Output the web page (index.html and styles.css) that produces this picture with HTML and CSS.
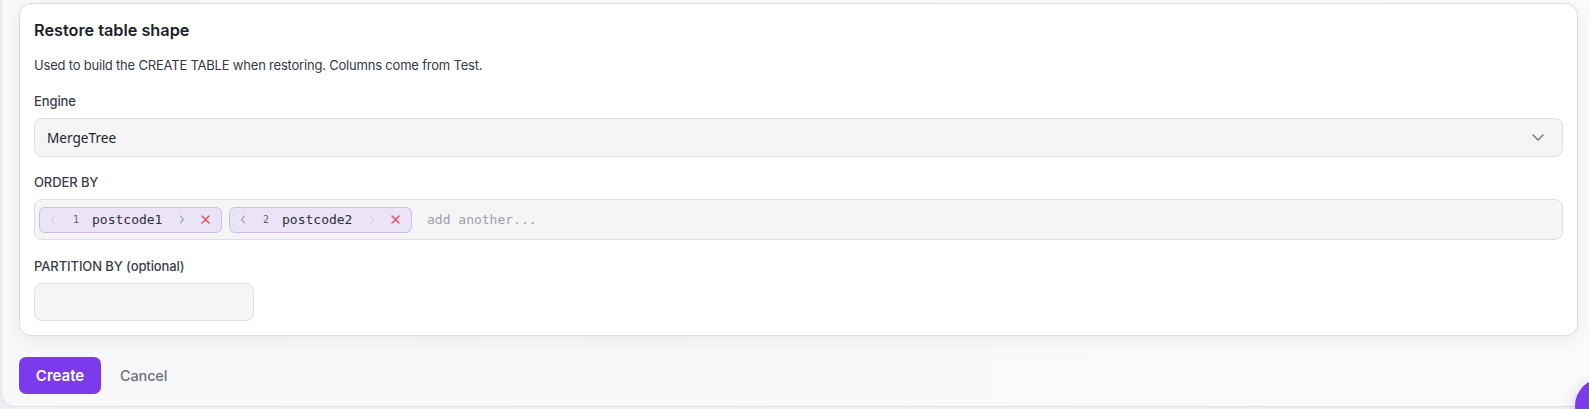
FILE: index.html
```html
<!DOCTYPE html>
<html lang="en">
<head>
<meta charset="utf-8">
<title>Restore table shape</title>
<link rel="stylesheet" href="styles.css">
</head>
<body>
<div class="panel">
  <section class="card">
    <h2 class="title">Restore table shape</h2>
    <p class="desc">Used to build the CREATE TABLE when restoring. Columns come from Test.</p>

    <div class="field field-first">
      <label class="label">Engine</label>
      <div class="select">
        <span class="select-value">MergeTree</span>
        <svg class="select-chevron" width="12" height="7" viewBox="0 0 12 7"><polyline points="1,1 6,6 11,1" fill="none" stroke="#6b7280" stroke-width="1.4" stroke-linecap="round" stroke-linejoin="round"/></svg>
      </div>
    </div>

    <div class="field">
      <label class="label">ORDER BY</label>
      <div class="tags">
        <span class="chip">
          <span class="chip-btn chip-btn-off"><svg width="6" height="9" viewBox="0 0 6 9"><polyline points="4.5,1 1.5,4.5 4.5,8" fill="none" stroke="currentColor" stroke-width="1.1" stroke-linecap="round" stroke-linejoin="round"/></svg></span>
          <span class="chip-num">1</span>
          <span class="chip-text">postcode1</span>
          <span class="chip-btn chip-btn-right"><svg width="6" height="9" viewBox="0 0 6 9"><polyline points="1.5,1 4.5,4.5 1.5,8" fill="none" stroke="currentColor" stroke-width="1.1" stroke-linecap="round" stroke-linejoin="round"/></svg></span>
          <span class="chip-x"><svg width="9" height="9" viewBox="0 0 9 9"><path d="M1 1 L8 8 M8 1 L1 8" fill="none" stroke="currentColor" stroke-width="1.3" stroke-linecap="round"/></svg></span>
        </span>
        <span class="chip">
          <span class="chip-btn"><svg width="6" height="9" viewBox="0 0 6 9"><polyline points="4.5,1 1.5,4.5 4.5,8" fill="none" stroke="currentColor" stroke-width="1.1" stroke-linecap="round" stroke-linejoin="round"/></svg></span>
          <span class="chip-num">2</span>
          <span class="chip-text">postcode2</span>
          <span class="chip-btn chip-btn-right chip-btn-off"><svg width="6" height="9" viewBox="0 0 6 9"><polyline points="1.5,1 4.5,4.5 1.5,8" fill="none" stroke="currentColor" stroke-width="1.1" stroke-linecap="round" stroke-linejoin="round"/></svg></span>
          <span class="chip-x"><svg width="9" height="9" viewBox="0 0 9 9"><path d="M1 1 L8 8 M8 1 L1 8" fill="none" stroke="currentColor" stroke-width="1.3" stroke-linecap="round"/></svg></span>
        </span>
        <span class="tags-placeholder">add another...</span>
      </div>
    </div>

    <div class="field field-last">
      <label class="label">PARTITION BY (optional)</label>
      <div class="input-short"></div>
    </div>
  </section>

  <div class="actions">
    <button class="btn-primary">Create</button>
    <button class="btn-ghost">Cancel</button>
  </div>
</div>
<div class="fab"></div>
</body>
</html>
```

FILE: styles.css
```css
* { box-sizing: border-box; }

html, body {
  margin: 0;
  height: 100%;
}

body {
  background: #efeff3;
  font-family: "Inter", "Liberation Sans", sans-serif;
  color: #1f2330;
  overflow: hidden;
}

.panel {
  margin-left: 1px;
  background: linear-gradient(90deg, #f8f8fa, #fafafc);
  border-left: 1px solid #e2e2e8;
  border-bottom: 1px solid #e2e2e8;
  border-bottom-left-radius: 14px;
  padding: 3px 11px 12px 17px;
}

.card {
  background: #ffffff;
  border: 1px solid #dcdce1;
  border-radius: 12px;
  box-shadow: 0 5px 16px rgba(30, 30, 60, 0.06);
  padding: 14px;
}

.title {
  margin: 0;
  font-size: 16.25px;
  line-height: 24px;
  font-weight: 600;
  color: #1c1f2b;
}

.desc {
  margin: 13px 0 0;
  font-size: 13px;
  line-height: 20px;
  color: #343a46;
  letter-spacing: -0.2px;
}

.field {
  margin-top: 15px;
}

.field-first {
  margin-top: 16px;
}

.field-last {
  margin-top: 16px;
}

.label {
  display: block;
  font-size: 13px;
  line-height: 20px;
  font-weight: 500;
  color: #3a3f4b;
  margin-bottom: 7px;
  letter-spacing: -0.1px;
}

.select {
  height: 39px;
  background: #f5f5f6;
  border: 1px solid #dfdfe3;
  border-radius: 8px;
  display: flex;
  align-items: center;
  justify-content: space-between;
  padding: 0 18px 0 12px;
}

.select-value {
  font-family: "Noto Sans", "DejaVu Sans", sans-serif;
  font-size: 13.6px;
  color: #1f2330;
}

.tags {
  height: 41px;
  background: #f5f5f6;
  border: 1px solid #dfdfe3;
  border-radius: 8px;
  display: flex;
  align-items: center;
  padding: 0 4px;
  gap: 7px;
}

.chip {
  display: inline-flex;
  align-items: center;
  width: 183px;
  height: 26px;
  background: #eae4f6;
  border: 1px solid #cbbdf0;
  border-radius: 6px;
  padding-left: 6px;
  font-family: "DejaVu Sans Mono", "Liberation Mono", monospace;
}

.chip-btn {
  width: 14px;
  height: 18px;
  display: inline-flex;
  align-items: center;
  justify-content: center;
  color: #8b909b;
}

.chip-btn-off {
  color: #cfd2d8;
}

.chip-num {
  width: 20px;
  margin-left: 6px;
  text-align: center;
  font-size: 10px;
  color: #5f6470;
}

.chip-text {
  margin-left: 6px;
  font-size: 13px;
  color: #2a2e38;
}

.chip-btn-right {
  margin-left: 13px;
}

.chip-x {
  width: 14px;
  height: 18px;
  margin-left: 9px;
  display: inline-flex;
  align-items: center;
  justify-content: center;
  color: #e5484d;
}

.tags-placeholder {
  margin-left: 8px;
  font-family: "DejaVu Sans Mono", "Liberation Mono", monospace;
  font-size: 13px;
  color: #9ca0a8;
}

.input-short {
  width: 220px;
  height: 38px;
  background: #f5f5f6;
  border: 1px solid #dfdfe3;
  border-radius: 8px;
}

.actions {
  margin-top: 21px;
  display: flex;
  align-items: center;
}

.btn-primary {
  height: 37px;
  width: 82px;
  border: none;
  border-radius: 7px;
  background: #7c3aed;
  color: #ffffff;
  font-family: "Inter", "Liberation Sans", sans-serif;
  font-size: 15px;
  font-weight: 600;
  padding: 0;
}

.btn-ghost {
  margin-left: 19px;
  border: none;
  background: none;
  padding: 0;
  font-family: "Inter", "Liberation Sans", sans-serif;
  font-size: 14.5px;
  font-weight: 500;
  letter-spacing: -0.15px;
  color: #6b7080;
}

.fab {
  position: fixed;
  left: 1575px;
  top: 378px;
  width: 56px;
  height: 56px;
  border-radius: 50%;
  background: #7c3aed;
  box-shadow: 0 4px 14px rgba(60, 20, 140, 0.25);
}
```
